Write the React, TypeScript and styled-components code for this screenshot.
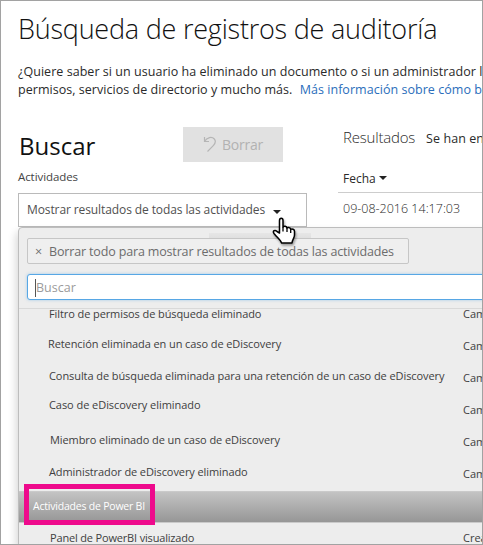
import React from "react";
import styled, { createGlobalStyle } from "styled-components";

const Global = createGlobalStyle`
  *, *::before, *::after { box-sizing: border-box; }
  body { margin: 0; background: #fff; font-family: "Open Sans", "Noto Sans", sans-serif; }
`;

const Frame = styled.main`
  position: relative;
  width: 483px;
  height: 545px;
  border: 1px solid #a2a2a2;
  overflow: hidden;
  background: #fff;
  color: #2a2a2a;
  white-space: nowrap;
`;

const Title = styled.h1`
  margin: 9px 0 0 17px;
  font-size: 27px;
  font-weight: 300;
  line-height: 38px;
  letter-spacing: -0.22px;
  color: #111;
`;

const Intro = styled.p`
  margin: 15px 0 0 17px;
  font-size: 12.5px;
  line-height: 18px;
  letter-spacing: 0.04px;
`;

const IntroLink = styled.a`
  margin-left: 4px;
  color: #2a6ebb;
`;

const Columns = styled.div`
  display: grid;
  grid-template-columns: 289px 1fr;
  column-gap: 31px;
  height: 128px;
  margin-left: 17px;
`;

const SearchHead = styled.div`
  display: flex;
  justify-content: space-between;
  padding: 28px 24px 0 0;
  height: 60px;
`;

const SearchTitle = styled.h2`
  margin: 0 0 0 1px;
  font-size: 24px;
  font-weight: 400;
  line-height: 37px;
  color: #111;
`;

const ClearButton = styled.button`
  display: flex;
  align-items: center;
  gap: 5px;
  width: 100px;
  height: 35px;
  padding: 0 0 0 20px;
  border: 0;
  background: #e1e1e1;
  color: #b2b2b2;
  font: 500 14px/35px "Open Sans", sans-serif;
  letter-spacing: -0.25px;
`;

const FieldLabel = styled.label`
  display: block;
  height: 34px;
  padding-top: 10px;
  font-size: 11.5px;
  line-height: 16px;
  letter-spacing: -0.08px;
  color: #444;
`;

const Select = styled.div`
  display: flex;
  align-items: center;
  gap: 8px;
  height: 34px;
  padding: 0 0 1px 8px;
  border: 1px solid #bababa;
  font-size: 12px;
  letter-spacing: -0.1px;
  color: #505050;
`;

const Caret = styled.i<{ $drop?: number }>`
  width: 0;
  height: 0;
  margin-top: ${(p) => p.$drop ?? 0}px;
  border: 4px solid transparent;
  border-top-color: #222;
  border-bottom: 0;
`;

const ResultsHead = styled.div`
  display: flex;
  align-items: baseline;
  gap: 11px;
  height: 60px;
  padding: 26px 0 0 5px;
  line-height: 24px;
`;

const ResultsTitle = styled.span`
  font-size: 15px;
  font-weight: 300;
  letter-spacing: -0.2px;
`;

const ResultsNote = styled.span`
  font-size: 12.5px;
  letter-spacing: 0.07px;
`;

const ColumnHead = styled.div`
  display: flex;
  align-items: center;
  gap: 3px;
  height: 34px;
  padding: 5px 0 0 5px;
  border-bottom: 1px solid #cdcdcd;
  font-size: 12px;
`;

const DateCell = styled.div`
  padding: 0 0 0 5px;
  font-size: 12.5px;
  font-weight: 300;
  line-height: 32px;
`;

const Panel = styled.section`
  position: relative;
  height: 318px;
  margin: 0 -8px 0 17px;
  border: 1px solid #bdbdbd;
  border-radius: 4px 0 0 0;
  background: #ededed;
  box-shadow: -2px 5px 9px rgba(0, 0, 0, 0.16);
`;

const PanelTop = styled.div`
  height: 81px;
  padding: 10px 0 0 8px;
  border-bottom: 1px solid #d9d9d9;
  background: linear-gradient(#e6e6e6, #dedede) 190px 5px / 102px 6px no-repeat;
`;

const Chip = styled.div`
  display: flex;
  align-items: center;
  gap: 7px;
  width: 382px;
  height: 26px;
  padding-left: 7px;
  border: 1px solid #c6c6c6;
  border-radius: 2px;
  background: #efefef;
  color: #6c6c6c;
  font-size: 12.5px;
  letter-spacing: -0.155px;
`;

const SearchInput = styled.div`
  display: flex;
  align-items: center;
  height: 26px;
  margin-top: 10px;
  padding: 1px 0 0 7px;
  border: 1px solid #57a7e5;
  border-radius: 3px 0 0 3px;
  background: #fff;
  box-shadow: 0 0 3px rgba(80, 165, 230, 0.5);
  color: #9b9b9b;
  font-size: 12.5px;
  line-height: 25px;
`;

const TextCursor = styled.i`
  width: 1px;
  height: 18px;
  background: #555;
`;

const Rows = styled.div`
  height: 185px;
  margin-top: -3px;
  overflow: hidden;
`;

const Row = styled.div`
  display: grid;
  grid-template-columns: 444px 1fr;
  height: 32px;
  font-size: 11px;
  line-height: 16px;
  color: #404040;
`;

const RowName = styled.span<{ $lift: number; $indent: number; $track: number }>`
  margin-top: ${(p) => -p.$lift}px;
  padding-left: ${(p) => p.$indent}px;
  letter-spacing: ${(p) => p.$track}px;
`;

const GroupBand = styled.div`
  height: 32px;
  padding-left: 14px;
  border: solid #cacaca;
  border-width: 1px 0;
  background: linear-gradient(#c3c3c3, #969696);
  color: #fff;
  font-size: 10.5px;
  line-height: 29px;
  letter-spacing: -0.21px;
`;

const LastRow = styled(Row)`
  height: 22px;
  padding-top: 7px;
`;

const Highlight = styled.div`
  position: absolute;
  left: 5px;
  top: 256px;
  width: 131px;
  height: 41px;
  border: 5px solid #ee0a8c;
`;

const HandPointer = styled.svg`
  position: absolute;
  left: 270px;
  top: 214px;
  filter: drop-shadow(1px 2px 1px rgba(0, 0, 0, 0.35));
`;

const rows = [
  { name: "Filtro de permisos de búsqueda eliminado", lift: 0, indent: 30, track: -0.09 },
  { name: "Retención eliminada en un caso de eDiscovery", lift: 2, indent: 29, track: -0.09 },
  { name: "Consulta de búsqueda eliminada para una retención de un caso de eDiscovery", lift: 2, indent: 30, track: -0.08 },
  { name: "Caso de eDiscovery eliminado", lift: 5, indent: 30, track: -0.055 },
  { name: "Miembro eliminado de un caso de eDiscovery", lift: 2, indent: 31, track: -0.08 },
  { name: "Administrador de eDiscovery eliminado", lift: 2, indent: 30, track: -0.09 },
];

export default function App() {
  return (
    <Frame>
      <Global />
      <Title>Búsqueda de registros de auditoría</Title>
      <Intro>
        ¿Quiere saber si un usuario ha eliminado un documento o si un administrador l
        <br />
        permisos, servicios de directorio y mucho más. <IntroLink>Más información sobre cómo b</IntroLink>
      </Intro>
      <Columns>
        <div>
          <SearchHead>
            <SearchTitle>Buscar</SearchTitle>
            <ClearButton>
              <svg width="14" height="17" viewBox="0 0 14 17" fill="none" stroke="#b5b5b5" strokeWidth="1.2">
                <path d="M1.500 1v4.500h4.500M1.500 5.500C4 1 9 .3 11.300 3C13.200 5.300 12.300 7.400 10.500 9.300L4.500 15.500" />
              </svg>
              Borrar
            </ClearButton>
          </SearchHead>
          <FieldLabel>Actividades</FieldLabel>
          <Select>
            Mostrar resultados de todas las actividades
            <Caret $drop={4} />
          </Select>
        </div>
        <div>
          <ResultsHead>
            <ResultsTitle>Resultados</ResultsTitle>
            <ResultsNote>Se han en</ResultsNote>
          </ResultsHead>
          <ColumnHead>
            Fecha
            <Caret />
          </ColumnHead>
          <DateCell>09-08-2016 14:17:03</DateCell>
        </div>
      </Columns>
      <Panel>
        <PanelTop>
          <Chip>
            <span>×</span>
            <span>Borrar todo para mostrar resultados de todas las actividades</span>
          </Chip>
          <SearchInput>
            <TextCursor />
            Buscar
          </SearchInput>
        </PanelTop>
        <Rows>
          {rows.map((r) => (
            <Row key={r.name}>
              <RowName $lift={r.lift} $indent={r.indent} $track={r.track}>{r.name}</RowName>
              <span>Cam</span>
            </Row>
          ))}
        </Rows>
        <GroupBand>Actividades de Power BI</GroupBand>
        <LastRow>
          <RowName $lift={0} $indent={31} $track={-0.17}>Panel de PowerBI visualizado</RowName>
          <span>Crea</span>
        </LastRow>
        <Highlight />
      </Panel>
      <HandPointer width="26" height="32" viewBox="0 0 26 32">
        <path
          d="M8.500 18V5.500C8.500 2.500 12 2.500 12 5.500V12c1-1.300 3.600-1 4 1c1.200-1 3.500-.5 3.700 1.300c1.300-.8 3.800 0 3.800 2V20c0 3-2 4-2.500 8H10.500C10 25 6.500 23 3 18.500C1 15.800 4 14.500 6 16.500Z"
          fill="#fff"
          stroke="#000"
          strokeWidth="1.500"
          strokeLinejoin="round"
        />
        <path d="M12 12v4.500M16 13v4M19.700 14.500V18" stroke="#000" strokeWidth="1.300" />
      </HandPointer>
    </Frame>
  );
}
